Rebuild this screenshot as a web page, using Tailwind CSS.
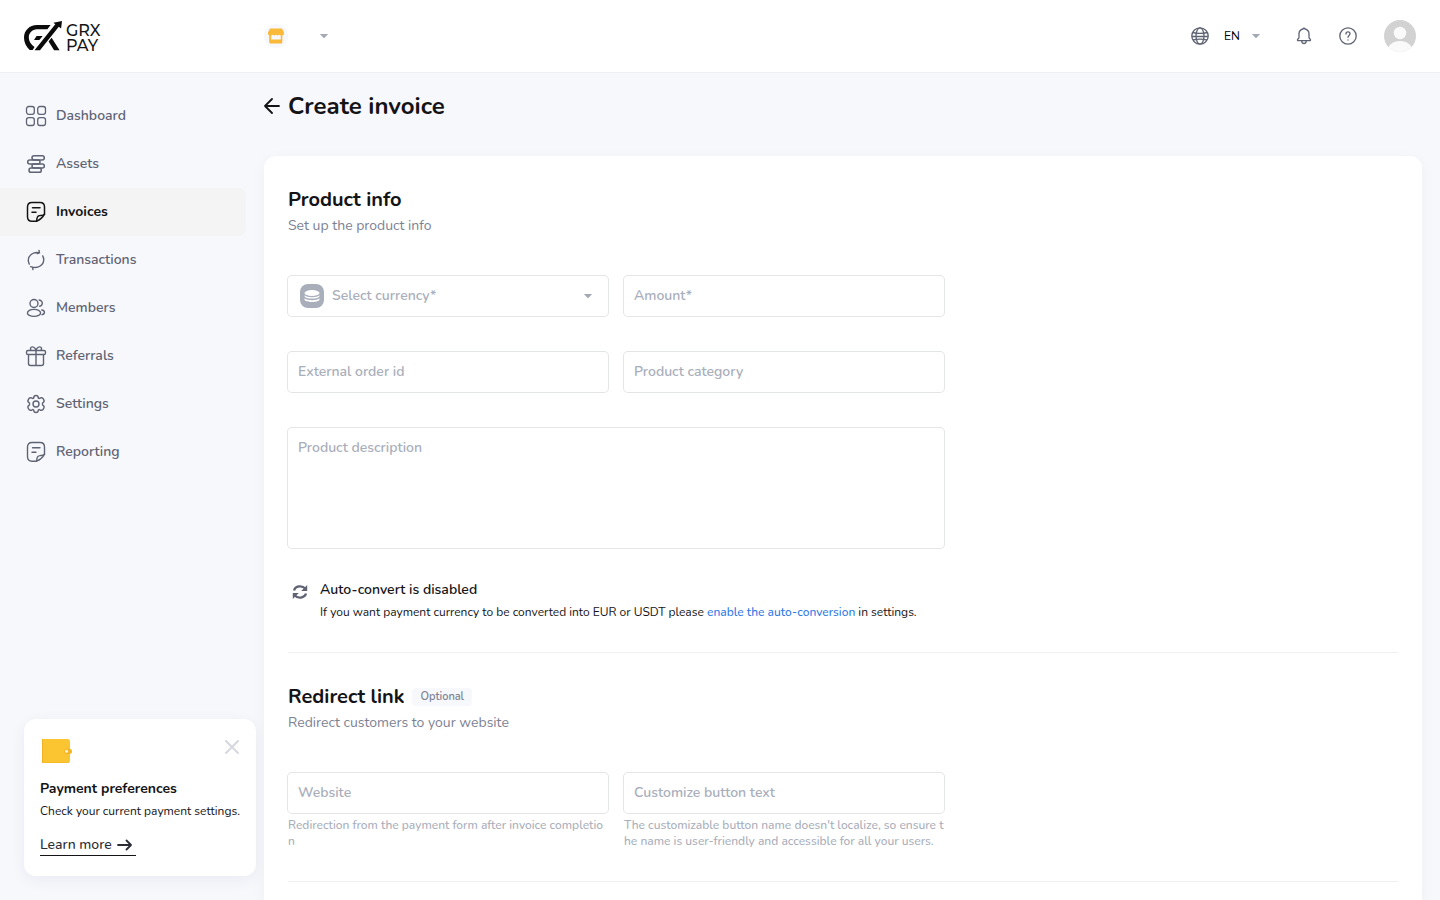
<!DOCTYPE html>
<html lang="en">
  <head>
    <meta charset="UTF-8" />
    <meta name="viewport" content="width=device-width, initial-scale=1.0" />
    <script src="https://cdn.jsdelivr.net/npm/@tailwindcss/browser@4"></script>
    <title>Create invoice - GRX Pay</title>
  </head>
  <body class="flex h-screen flex-col overflow-hidden bg-[#f7f8fc] font-[Nunito,Lato,sans-serif] text-[#141416]">
    <header class="flex h-[73px] shrink-0 items-center border-b border-[#f0f0f2] bg-white px-6">
      <a href="#" class="flex w-60 items-center gap-1 pt-[2px]" aria-label="GRX Pay home">
        <svg class="h-8 w-[38px]" viewBox="0 0 38 32" fill="#0b0b0c">
          <path d="M26.6 4H13C5.500 4 0 9.500 0 16.500c0 5 2 9 5.700 12.600h3l1.800-3.200C7 23.500 4.800 20.400 4.800 16.500c0-4.600 3.300-8.300 8.200-8.300h10.400z" />
          <path d="M38 0l-.9 7.500-2.300-1.700L16 29.300h-5.500L31.300 3.200 29.400 1.700z" />
          <path d="M12.600 15h6l-3.200 3.900H10zM24.600 20.500l3-3.700 8 12.500h-5.500z" />
        </svg>
        <span class="pt-[2px] font-[Montserrat,Inter,sans-serif] text-base leading-[15px] font-medium">GRX<br />PAY</span>
      </a>
      <button class="flex cursor-pointer items-center gap-8" aria-label="Select store">
        <span class="grid size-6 place-items-center rounded-full bg-[#f7f8fc]">
          <svg class="size-4" viewBox="0 0 16 16" fill="#f9b93a">
            <path d="M2 .5h12l2 4v1.200c0 1-.9 1.600-1.700 1.600V14c0 .8-.6 1.500-1.400 1.500H2.600c-.8 0-1.400-.7-1.400-1.500V7.300C.5 7 0 6.500 0 5.700V4.500zM3.200 7.400v4h9.600v-4l-1.600-.7-1.600.7L8 6.700l-1.600.7-1.600-.7z" />
          </svg>
        </span>
        <svg class="h-1 w-2" viewBox="0 0 8 4" fill="#a5a9b6"><path d="M.5 0h7q.8 0 .2.600L4.600 3.700q-.6.500-1.200 0L.3.600Q-.3 0 .5 0z" /></svg>
      </button>

      <div class="ml-auto flex items-center text-[#5f6373]">
        <svg class="size-6" viewBox="0 0 24 24" fill="none" stroke="currentColor" stroke-width="1.300">
          <circle cx="12" cy="12" r="8.200" />
          <ellipse cx="12" cy="12" rx="4" ry="8.200" />
          <path d="M4.700 8.500c4.500 1.200 10.100 1.200 14.600 0M3.800 12.500h16.400M4.900 16c4.500-1.200 9.700-1.200 14.200 0" />
        </svg>
        <label class="ml-3 flex items-center gap-3">
          <select class="cursor-pointer appearance-none text-xs text-black outline-none" aria-label="Language">
            <option>EN</option>
          </select>
          <svg class="h-1 w-2" viewBox="0 0 8 4" fill="#a5a9b6"><path d="M.5 0h7q.8 0 .2.600L4.600 3.700q-.6.500-1.200 0L.3.600Q-.3 0 .5 0z" /></svg>
        </label>
        <button class="ml-8 cursor-pointer" aria-label="Notifications">
          <svg class="size-6" viewBox="0 0 24 24" fill="none" stroke="currentColor" stroke-width="1.300" stroke-linejoin="round">
            <path d="M11 5c.2-1 1.800-1 2 0 2.600.6 4 2.500 4 5v3.300c0 .5.2.9.5 1.200l.8.8c.5.600.2 1.400-.6 1.400H6.300c-.8 0-1.100-.8-.6-1.400l.8-.8c.3-.3.500-.7.500-1.200V10c0-2.500 1.400-4.400 4-5z" />
            <path d="M9.700 16.900c.2 1.700 1 2.700 2.300 2.700s2.100-1 2.300-2.700" />
          </svg>
        </button>
        <button class="ml-5 cursor-pointer" aria-label="Help">
          <svg class="size-6" viewBox="0 0 24 24" fill="none" stroke="currentColor" stroke-width="1.300" stroke-linecap="round">
            <circle cx="12" cy="12" r="8.200" />
            <path d="M10 10c0-1.300.8-2.100 2-2.100s2 .8 2 1.900c0 1.600-2 1.700-2 3.500M12 15.800v.2" />
          </svg>
        </button>
        <button class="ml-6 size-8 cursor-pointer overflow-hidden rounded-full" aria-label="Account">
          <svg class="size-8" viewBox="0 0 32 32">
            <path fill="#d2d2d3" d="M0 0h32v32H0z" />
            <g fill="#fafafa"><circle cx="16" cy="13" r="6.200" /><ellipse cx="16" cy="32" rx="13" ry="11" /></g>
          </svg>
        </button>
      </div>
    </header>

    <div class="flex min-h-0 flex-1">
      <aside class="flex w-64 shrink-0 flex-col justify-between pt-[19px] pb-6">
        <nav class="mr-[10px] text-sm font-semibold text-[#5f6373]">
          <a href="#" class="flex h-12 items-center gap-2 rounded-r-lg pl-6">
            <svg class="size-6" viewBox="0 0 24 24" fill="none" stroke="currentColor" stroke-width="1.300">
              <rect x="2.500" y="2.500" width="7.800" height="7.800" rx="2.200" /><rect x="13.700" y="2.500" width="7.800" height="7.800" rx="2.200" />
              <rect x="2.500" y="13.700" width="7.800" height="7.800" rx="2.200" /><rect x="13.700" y="13.700" width="7.800" height="7.800" rx="2.200" />
            </svg>
            Dashboard
          </a>
          <a href="#" class="flex h-12 items-center gap-2 rounded-r-lg pl-6">
            <svg class="size-6" viewBox="0 0 24 24" fill="none" stroke="currentColor" stroke-width="1.500">
              <rect x="8" y="3.700" width="12.300" height="4.200" rx="2.100" /><rect x="3.700" y="7.900" width="12.300" height="4.100" rx="2" />
              <rect x="8" y="12" width="12.300" height="4.100" rx="2" /><rect x="5" y="16.100" width="12.300" height="4.200" rx="2.100" />
            </svg>
            Assets
          </a>
          <a href="#" class="flex h-12 items-center gap-2 rounded-r-lg bg-[#f4f4f4] pl-6 font-bold text-[#141416]">
            <svg class="size-6" viewBox="0 0 24 24" fill="none" stroke="currentColor" stroke-width="1.500" stroke-linecap="round" stroke-linejoin="round">
              <path d="M12.500 21.200H8c-3 0-4.500-1.500-4.500-4.500V7c0-3 1.500-4.500 4.500-4.500h8c3 0 4.500 1.500 4.500 4.500v7.200c-1.500 2.800-4.300 5.700-8 7z" />
              <path d="M12.500 21.200c.5-1 .2-2.500.7-3.700.4-1.200 1.300-1.800 2.600-1.900 1.800-.2 3.600.3 4.700-1.400M8.500 7.800h7.500M8 12.300h4" />
            </svg>
            Invoices
          </a>
          <a href="#" class="flex h-12 items-center gap-2 rounded-r-lg pl-6">
            <svg class="size-6" viewBox="0 0 24 24" fill="none" stroke="currentColor" stroke-width="1.400" stroke-linecap="round" stroke-linejoin="round">
              <path d="M15.500 4.900C10 3.200 4.300 7 4.300 12.300c0 1.400.4 2.700 1 3.800M15 2.500l.5 2.400-2.200.6M8.500 19.100c5.500 1.700 11.200-2.100 11.200-7.400 0-1.400-.4-2.700-1-3.800M9 21.500l-.5-2.400-1.900-.5" />
            </svg>
            Transactions
          </a>
          <a href="#" class="flex h-12 items-center gap-2 rounded-r-lg pl-6">
            <svg class="size-6" viewBox="0 0 24 24" fill="none" stroke="currentColor" stroke-width="1.400" stroke-linecap="round">
              <circle cx="10" cy="7.500" r="4" /><ellipse cx="10" cy="16.900" rx="6.600" ry="3.500" />
              <path d="M15.200 4c2.900.5 3.900 3.100 2.500 5-.5.700-1.200 1.100-2 1.200M17.800 14c3.400.5 3.500 3.700.3 4.700" />
            </svg>
            Members
          </a>
          <a href="#" class="flex h-12 items-center gap-2 rounded-r-lg pl-6">
            <svg class="size-6" viewBox="0 0 24 24" fill="none" stroke="currentColor" stroke-width="1.400">
              <rect x="2.500" y="6.500" width="19" height="4" rx="1.600" />
              <path d="M4.500 10.500v9c0 1.300.7 2 2 2h11c1.300 0 2-.7 2-2v-9M12 6.500v15M12 6.300C11 3.300 8.600 2.200 7.200 3.300c-1.200 1-.8 2.600.2 3.200M12 6.300c1-3 3.400-4.100 4.800-3 1.200 1 .8 2.600-.2 3.200" />
            </svg>
            Referrals
          </a>
          <a href="#" class="flex h-12 items-center gap-2 rounded-r-lg pl-6">
            <svg class="size-6" viewBox="0 0 24 24" fill="none" stroke="currentColor" stroke-width="1.400" stroke-linejoin="round">
              <circle cx="12" cy="12" r="3" />
              <path d="M9.800 5.500c0-1.300.9-2 2.200-2s2.200.7 2.200 2c.2 1 1 1.200 1.700.7 1.200-.8 2.600-.5 3.200.5l.7 1.200c.6 1.100.2 2.200-.8 2.800-.8.500-.8 2.100 0 2.600 1 .6 1.400 1.700.8 2.800l-.7 1.200c-.6 1-2 1.300-3.200.5-.7-.5-1.500-.3-1.700.7 0 1.300-.9 2-2.200 2s-2.200-.7-2.200-2c-.2-1-1-1.200-1.700-.7-1.200.8-2.600.5-3.200-.5l-.7-1.200c-.6-1.100-.2-2.200.8-2.800.8-.5.800-2.100 0-2.600-1-.6-1.400-1.700-.8-2.800l.7-1.200c.6-1 2-1.300 3.200-.5.7.5 1.500.3 1.700-.7z" />
            </svg>
            Settings
          </a>
          <a href="#" class="flex h-12 items-center gap-2 rounded-r-lg pl-6">
            <svg class="size-6" viewBox="0 0 24 24" fill="none" stroke="currentColor" stroke-width="1.400" stroke-linecap="round" stroke-linejoin="round">
              <path d="M12.500 21.200H8c-3 0-4.500-1.500-4.500-4.500V7c0-3 1.500-4.500 4.500-4.500h8c3 0 4.500 1.500 4.500 4.500v7.200c-1.500 2.800-4.300 5.700-8 7z" />
              <path d="M12.500 21.200c.5-1 .2-2.500.7-3.700.4-1.200 1.300-1.800 2.600-1.900 1.800-.2 3.600.3 4.700-1.400M8.500 7.800h7.500M8 12.300h4" />
            </svg>
            Reporting
          </a>
        </nav>

        <div class="ml-6 rounded-xl bg-white p-4 pb-5 shadow-[0_4px_16px_rgba(30,30,60,0.06)]">
          <div class="flex items-start justify-between">
            <svg class="size-8" viewBox="0 0 32 32">
              <path fill="#fbc531" d="M2 4h25.500c1.600 0 2.500 1 2.500 2.500v19c0 1.500-.9 2.500-2.500 2.500H2z" />
              <path fill="#efb024" d="M2 4.500h1V28H2zM2 27.500h27v.5H2z" />
              <path fill="#f3b52a" d="M24 16.200c0-1.600 1-2.500 2.500-2.500h3.300c3 .4 3 5 0 5.200h-3.300c-1.500 0-2.500-1-2.500-2.700z" />
              <circle cx="26.500" cy="16.300" r="1.500" fill="#fff3cf" />
            </svg>
            <button class="-mr-1 cursor-pointer" aria-label="Close">
              <svg class="size-6" viewBox="0 0 24 24" stroke="#d6d7e0" stroke-width="2" stroke-linecap="round"><path d="M6 6l12 12M18 6L6 18" /></svg>
            </button>
          </div>
          <h2 class="mt-3 text-sm leading-5 font-bold">Payment preferences</h2>
          <p class="mt-[2px] text-xs leading-5 whitespace-nowrap">Check your current payment settings.</p>
          <a href="#" class="mt-3 flex h-[23px] w-24 items-center gap-1 border-b border-[#141416] pt-[2px] text-sm font-medium whitespace-nowrap text-[#2b2c35]">
            Learn more
            <svg class="size-4 shrink-0" viewBox="0 0 16 16" fill="none" stroke="currentColor" stroke-width="1.800" stroke-linecap="round" stroke-linejoin="round"><path d="M2 8h13M10.500 3.500L15 8l-4.500 4.500" /></svg>
          </a>
        </div>
      </aside>

      <main class="flex min-w-0 flex-1 flex-col pr-[18px] pl-2">
        <div class="flex h-[83px] shrink-0 items-start gap-2 pt-[17px]">
          <a href="#" class="flex h-8 items-center" aria-label="Back">
            <svg class="size-4" viewBox="0 0 16 16" fill="none" stroke="currentColor" stroke-width="1.800" stroke-linecap="round" stroke-linejoin="round"><path d="M15 8H1M8 1L1 8l7 7" /></svg>
          </a>
          <h1 class="text-2xl leading-8 font-bold">Create invoice</h1>
        </div>

        <form class="flex-1 rounded-t-xl bg-white px-6 pt-[30px] shadow-[0_4px_16px_rgba(30,30,60,0.04)]">
          <section class="border-b border-[#f0f0f2] pb-[30px]">
            <h2 class="text-xl leading-7 font-bold">Product info</h2>
            <p class="text-sm leading-6 text-[#7d8293]">Set up the product info</p>

            <div class="mt-[38px] grid max-w-[656px] grid-cols-2 gap-x-4 gap-y-9 text-sm font-semibold text-[#a9aebb]">
              <label class="flex h-10 items-center gap-2 rounded-sm pr-4 pl-3 ring-1 ring-[#e4e5e9]">
                <svg class="size-6 shrink-0" viewBox="0 0 24 24">
                  <rect width="24" height="24" rx="8" fill="#a9aebb" />
                  <g fill="#fff"><ellipse cx="12" cy="9" rx="7.500" ry="3" /><path d="M4.500 11.200c2 2.600 13 2.600 15 0v.8c0 3.400-15 3.400-15 0zM4.500 14.300c2 2.600 13 2.600 15 0v.9c0 3.700-15 3.700-15 0z" /></g>
                </svg>
                <select class="min-w-0 flex-1 cursor-pointer appearance-none outline-none" aria-label="Select currency">
                  <option>Select currency*</option>
                </select>
                <svg class="h-1 w-2" viewBox="0 0 8 4" fill="#a5a9b6"><path d="M.5 0h7q.8 0 .2.600L4.600 3.700q-.6.500-1.200 0L.3.600Q-.3 0 .5 0z" /></svg>
              </label>
              <input class="h-10 rounded-sm px-[10px] pb-[2px] ring-1 ring-[#e4e5e9] outline-none placeholder:text-[#a9aebb]" type="text" aria-label="Amount" placeholder="Amount*" />
              <input class="h-10 rounded-sm px-[10px] pb-[2px] ring-1 ring-[#e4e5e9] outline-none placeholder:text-[#a9aebb]" type="text" aria-label="External order id" placeholder="External order id" />
              <input class="h-10 rounded-sm px-[10px] pb-[2px] ring-1 ring-[#e4e5e9] outline-none placeholder:text-[#a9aebb]" type="text" aria-label="Product category" placeholder="Product category" />
              <textarea class="col-span-2 h-[120px] resize-none rounded-sm px-[10px] py-[10px] ring-1 ring-[#e4e5e9] outline-none placeholder:text-[#a9aebb]" aria-label="Product description" placeholder="Product description"></textarea>
            </div>

            <div class="mt-8 flex gap-2">
              <svg class="mt-[2px] h-[20px] w-6" viewBox="0 0 24 20" fill="none" stroke="#5f6373" stroke-width="2.200">
                <path d="M6 8.500c1.200-4.700 8-5.600 11.500-1.800M18 11.500c-1.200 4.700-8 5.600-11.500 1.800" />
                <path fill="#5f6373" stroke="none" d="M19.200 3v6h-6zM4.800 17v-6h6z" />
              </svg>
              <div>
                <h3 class="text-sm leading-5 font-semibold">Auto-convert is disabled</h3>
                <p class="mt-[2px] text-xs leading-5">
                  If you want payment currency to be converted into EUR or USDT please <a href="#" class="font-medium text-[#2f7ae5]">enable the auto-conversion</a> in settings.
                </p>
              </div>
            </div>
          </section>

          <section class="border-b border-[#f0f0f2] pt-[30px] pb-8">
            <div class="flex items-center gap-2">
              <h2 class="text-xl leading-7 font-bold">Redirect link</h2>
              <span class="rounded-sm bg-[#f7f8fc] px-2 text-[11px] leading-[18px] font-semibold text-[#7d8293]">Optional</span>
            </div>
            <p class="text-sm leading-6 text-[#7d8293]">Redirect customers to your website</p>

            <div class="mt-[38px] grid max-w-[656px] grid-cols-2 gap-x-4 text-sm font-semibold text-[#a9aebb]">
              <div>
                <input class="h-10 w-full rounded-sm px-[10px] pb-[2px] ring-1 ring-[#e4e5e9] outline-none placeholder:text-[#a9aebb]" type="url" aria-label="Website" placeholder="Website" />
                <p class="mt-1 text-xs leading-4 font-medium whitespace-nowrap">Redirection from the payment form after invoice completio<br />n</p>
              </div>
              <div>
                <input class="h-10 w-full rounded-sm px-[10px] pb-[2px] ring-1 ring-[#e4e5e9] outline-none placeholder:text-[#a9aebb]" type="text" aria-label="Customize button text" placeholder="Customize button text" />
                <p class="mt-1 text-xs leading-4 font-medium whitespace-nowrap">The customizable button name doesn't localize, so ensure t<br />he name is user-friendly and accessible for all your users.</p>
              </div>
            </div>
          </section>
        </form>
      </main>
    </div>
  </body>
</html>
